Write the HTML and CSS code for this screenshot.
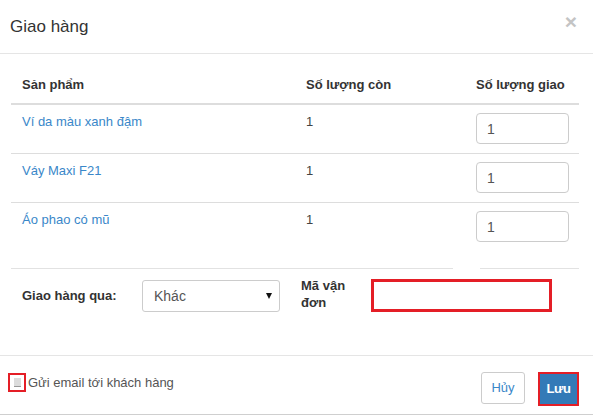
FILE: index.html
```html
<!DOCTYPE html>
<html>
<head>
<meta charset="utf-8">
<link rel="stylesheet" href="styles.css">
</head>
<body>
<div class="modal">
  <div class="modal-header">
    <div class="title">Giao hàng</div>
    <div class="close">×</div>
  </div>
  <div class="modal-body">
    <table class="items">
      <colgroup><col class="c1"><col class="c2"><col class="c3"></colgroup>
      <thead>
        <tr><th>Sản phẩm</th><th>Số lượng còn</th><th>Số lượng giao</th></tr>
      </thead>
      <tbody>
        <tr><td><a class="link">Ví da màu xanh đậm</a></td><td>1</td><td><div class="qty">1</div></td></tr>
        <tr><td><a class="link">Váy Maxi F21</a></td><td>1</td><td><div class="qty">1</div></td></tr>
        <tr class="last"><td><a class="link">Áo phao có mũ</a></td><td>1</td><td><div class="qty">1</div></td></tr>
      </tbody>
    </table>
    <div class="sep"><span class="seg-left"></span><span class="seg-right"></span></div>
    <div class="form-row">
      <div class="label ship">Giao hàng qua:</div>
      <div class="select"><span>Khác</span><span class="caret"></span></div>
      <div class="label code">Mã vận<br>đơn</div>
      <div class="code-input"></div>
    </div>
  </div>
  <div class="modal-footer">
    <div class="check">
      <span class="check-frame"><span class="check-box"></span></span>
      <span class="check-text">Gửi email tới khách hàng</span>
    </div>
    <div class="buttons">
      <div class="btn cancel">Hủy</div>
      <div class="btn-frame"><div class="btn save">Lưu</div></div>
    </div>
  </div>
</div>
</body>
</html>
```
FILE: styles.css
```css
html, body {
  margin: 0;
  padding: 0;
  background: #fff;
}
body {
  font-family: "Liberation Sans", Arial, sans-serif;
  font-size: 13px;
  color: #333;
}
.modal {
  width: 593px;
  height: 417px;
  overflow: hidden;
}
.modal-header {
  height: 54px;
  border-bottom: 1px solid #e5e5e5;
  display: flex;
  align-items: center;
  justify-content: space-between;
  padding: 0 16px 0 10px;
  box-sizing: border-box;
}
.title {
  font-size: 17px;
  line-height: 20px;
}
.close {
  font-size: 21px;
  font-weight: bold;
  color: #c4c4c4;
  line-height: 20px;
  margin-top: -10px;
}
.modal-body {
  padding: 12px 14px 0 11px;
}
.items {
  width: 568px;
  table-layout: fixed;
  border-collapse: collapse;
}
.c1 { width: 284px; }
.c2 { width: 170px; }
.c3 { width: 114px; }
.items th {
  text-align: left;
  font-weight: bold;
  padding: 10px 11px 9px;
  line-height: 18px;
  border-bottom: 2px solid #ddd;
}
.items td {
  vertical-align: top;
  padding: 8px 11px 9px;
  line-height: 18px;
  border-bottom: 1px solid #ddd;
}
.items td:nth-child(2) {
  color: #444;
}
.items td:last-child {
  padding-left: 11px;
  padding-right: 10px;
}
.items tr.last td {
  border-bottom: none;
}
.link {
  color: #3a87c9;
}
.qty {
  width: 93px;
  height: 31px;
  box-sizing: border-box;
  border: 1px solid #ccc;
  border-radius: 4px;
  padding: 0 10px;
  line-height: 30px;
  font-size: 14px;
  color: #555;
}
.sep {
  display: flex;
  margin-top: 17px;
  height: 1px;
}
.seg-left {
  width: 442px;
  background: #e2e2e2;
}
.seg-right {
  margin-left: 27px;
  width: 99px;
  background: #e2e2e2;
}
.form-row {
  display: flex;
  align-items: center;
  padding: 10px 0 0 11px;
}
.label {
  font-weight: bold;
  color: #333;
}
.ship {
  width: 120px;
}
.select {
  width: 138px;
  height: 32px;
  box-sizing: border-box;
  border: 1px solid #ccc;
  border-radius: 3px;
  display: flex;
  align-items: center;
  justify-content: space-between;
  padding: 0 7px 0 11px;
  font-size: 14px;
  color: #555;
}
.caret {
  width: 0;
  height: 0;
  border-left: 3.5px solid transparent;
  border-right: 3.5px solid transparent;
  border-top: 6px solid #111;
}
.code {
  margin-left: 21px;
  width: 70px;
  line-height: 17px;
  align-self: flex-start;
  margin-top: -2px;
}
.code-input {
  width: 181px;
  height: 33px;
  box-sizing: border-box;
  border: 3px solid #e41e26;
  background: #fff;
}
.modal-footer {
  margin-top: 43px;
  border-top: 1px solid #e5e5e5;
  border-bottom: 1px solid #cfcfcf;
  height: 42px;
  display: flex;
  align-items: flex-start;
  justify-content: space-between;
  padding: 16px 14px 0 8px;
}
.check {
  display: flex;
  align-items: center;
  margin-top: 1px;
}
.check-frame {
  width: 18px;
  height: 19px;
  box-sizing: border-box;
  border: 2px solid #e41e26;
  display: flex;
  align-items: center;
  justify-content: center;
}
.check-box {
  width: 7px;
  height: 9px;
  background: #dcdcdc;
  border-bottom: 1px solid #999;
  box-sizing: border-box;
}
.check-text {
  margin-left: 2px;
  color: #555;
  font-size: 13px;
}
.buttons {
  display: flex;
  align-items: flex-start;
}
.btn {
  box-sizing: border-box;
  font-size: 13px;
  text-align: center;
}
.cancel {
  width: 44px;
  height: 32px;
  line-height: 30px;
  border: 1px solid #ccc;
  border-radius: 3px;
  color: #3a87c9;
  background: #fff;
}
.btn-frame {
  margin-left: 13px;
  width: 41px;
  height: 34px;
  box-sizing: border-box;
  border: 2px solid #e41e26;
}
.save {
  width: 100%;
  height: 100%;
  background: #337ab7;
  color: #fff;
  font-weight: bold;
  line-height: 30px;
  letter-spacing: -0.5px;
}
```
